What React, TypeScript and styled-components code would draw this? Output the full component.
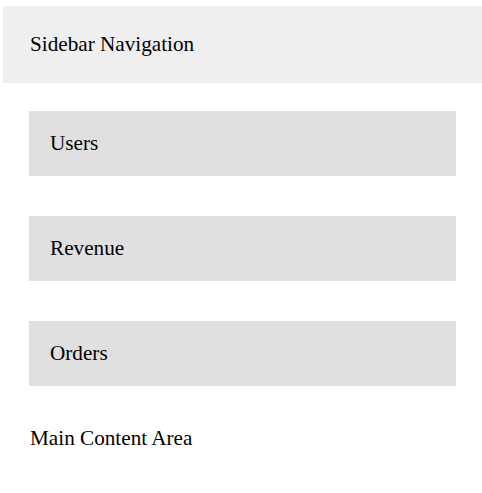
import styled, { createGlobalStyle } from "styled-components";

const GlobalStyle = createGlobalStyle`
  body {
    margin: 0;
    background: #fff;
    font-family: "Liberation Serif", "Times New Roman", serif;
    color: #000;
  }
`;

const Page = styled.div`
  padding: 6px 0 0 3px;
`;

const Sidebar = styled.div`
  height: 77px;
  background: #efefef;
  display: flex;
  align-items: center;
  padding-left: 27px;
  font-size: 21.2px;
`;

const NavList = styled.div`
  display: flex;
  flex-direction: column;
  gap: 40px;
  margin: 28px 0 0 26px;
  width: 427px;
`;

const NavItem = styled.div`
  height: 65px;
  background: #e0e0e0;
  display: flex;
  align-items: center;
  padding-left: 21px;
  font-size: 21.2px;
`;

const Main = styled.div`
  margin-top: 40px;
  padding-left: 27px;
  font-size: 21.2px;
`;

const items = ["Users", "Revenue", "Orders"];

const App = () => {
  return (
    <>
      <GlobalStyle />
      <Page>
        <Sidebar>Sidebar Navigation</Sidebar>
        <NavList>
          {items.map((item) => (
            <NavItem key={item}>{item}</NavItem>
          ))}
        </NavList>
        <Main>Main Content Area</Main>
      </Page>
    </>
  );
};

export default App;
